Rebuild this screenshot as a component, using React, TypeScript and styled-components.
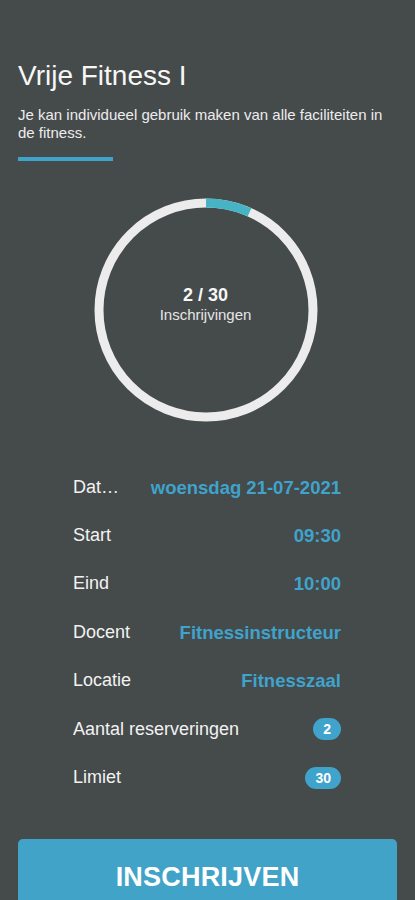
import React from "react";
import styled, { createGlobalStyle } from "styled-components";

const GlobalStyle = createGlobalStyle`
  html, body {
    margin: 0;
    padding: 0;
    background: #454a4b;
    font-family: "Liberation Sans", Arial, sans-serif;
    color: #f2f2f2;
  }
  * { box-sizing: border-box; }
`;

const Page = styled.div`
  min-height: 900px;
  padding: 0 18px;
  background: #454a4b;
  overflow: hidden;
`;

const Title = styled.h1`
  margin: 60px 0 0;
  font-size: 28px;
  line-height: 32px;
  font-weight: 400;
  color: #f7f7f7;
`;

const Subtitle = styled.p`
  margin: 14px 0 0;
  font-size: 15px;
  line-height: 18px;
  color: #ededed;
`;

const Accent = styled.div`
  margin-top: 15px;
  width: 95px;
  height: 4px;
  background: #3fa3cc;
`;

const RingWrap = styled.div`
  margin: 37px auto 0;
  width: 224px;
  height: 224px;
  display: grid;
  place-items: center;
  transform: translateX(-2px);
  & > * {
    grid-area: 1 / 1;
  }
`;

const RingText = styled.div`
  display: flex;
  flex-direction: column;
  align-items: center;
  padding-bottom: 12px;
`;

const Count = styled.div`
  font-size: 18px;
  line-height: 21px;
  font-weight: 700;
  color: #f7f7f7;
`;

const CountLabel = styled.div`
  font-size: 15px;
  line-height: 17px;
  color: #e6e6e6;
`;

const Details = styled.div`
  margin-top: 41px;
  padding: 0 56px 0 55px;
  display: flex;
  flex-direction: column;
`;

const Row = styled.div`
  height: 48.4px;
  display: flex;
  align-items: center;
  gap: 28px;
`;

const Label = styled.span`
  flex: 1;
  min-width: 0;
  font-size: 18px;
  line-height: 21px;
  color: #f2f2f2;
  white-space: nowrap;
  overflow: hidden;
  text-overflow: ellipsis;
`;

const Value = styled.span`
  flex-shrink: 0;
  font-size: 18.5px;
  line-height: 21px;
  font-weight: 700;
  color: #3fa3cc;
`;

const Badge = styled.span`
  flex-shrink: 0;
  height: 22px;
  padding: 0 10px;
  border-radius: 11px;
  background: #3fa3cc;
  color: #ffffff;
  font-size: 14px;
  font-weight: 700;
  display: inline-flex;
  align-items: center;
  justify-content: center;
`;

const Button = styled.button`
  display: flex;
  align-items: center;
  justify-content: center;
  width: 100%;
  height: 78px;
  margin-top: 37px;
  border: none;
  border-radius: 5px;
  background: #42a3c8;
  color: #ffffff;
  font-family: "Liberation Sans", Arial, sans-serif;
  font-size: 27px;
  font-weight: 700;
  letter-spacing: 0.2px;
`;

const R = 107;
const C = 2 * Math.PI * R;

function Ring({ value, max }: { value: number; max: number }) {
  const frac = value / max;
  return (
    <svg width="224" height="224" viewBox="0 0 224 224">
      <circle cx="112" cy="112" r={R} fill="none" stroke="#ececec" strokeWidth="9" />
      <circle
        cx="112"
        cy="112"
        r={R}
        fill="none"
        stroke="#46b4c4"
        strokeWidth="9"
        strokeDasharray={`${C * frac} ${C}`}
        transform="rotate(-90 112 112)"
      />
    </svg>
  );
}

type Item = { label: string; value: string; badge?: boolean };

const items: Item[] = [
  { label: "Datum", value: "woensdag 21-07-2021" },
  { label: "Start", value: "09:30" },
  { label: "Eind", value: "10:00" },
  { label: "Docent", value: "Fitnessinstructeur" },
  { label: "Locatie", value: "Fitnesszaal" },
  { label: "Aantal reserveringen", value: "2", badge: true },
  { label: "Limiet", value: "30", badge: true },
];

export default function App() {
  return (
    <>
      <GlobalStyle />
      <Page>
        <Title>Vrije Fitness I</Title>
        <Subtitle>
          Je kan individueel gebruik maken van alle faciliteiten in de fitness.
        </Subtitle>
        <Accent />
        <RingWrap>
          <Ring value={2} max={30} />
          <RingText>
            <Count>2 / 30</Count>
            <CountLabel>Inschrijvingen</CountLabel>
          </RingText>
        </RingWrap>
        <Details>
          {items.map((it) => (
            <Row key={it.label}>
              <Label>{it.label}</Label>
              {it.badge ? <Badge>{it.value}</Badge> : <Value>{it.value}</Value>}
            </Row>
          ))}
        </Details>
        <Button>INSCHRIJVEN</Button>
      </Page>
    </>
  );
}
